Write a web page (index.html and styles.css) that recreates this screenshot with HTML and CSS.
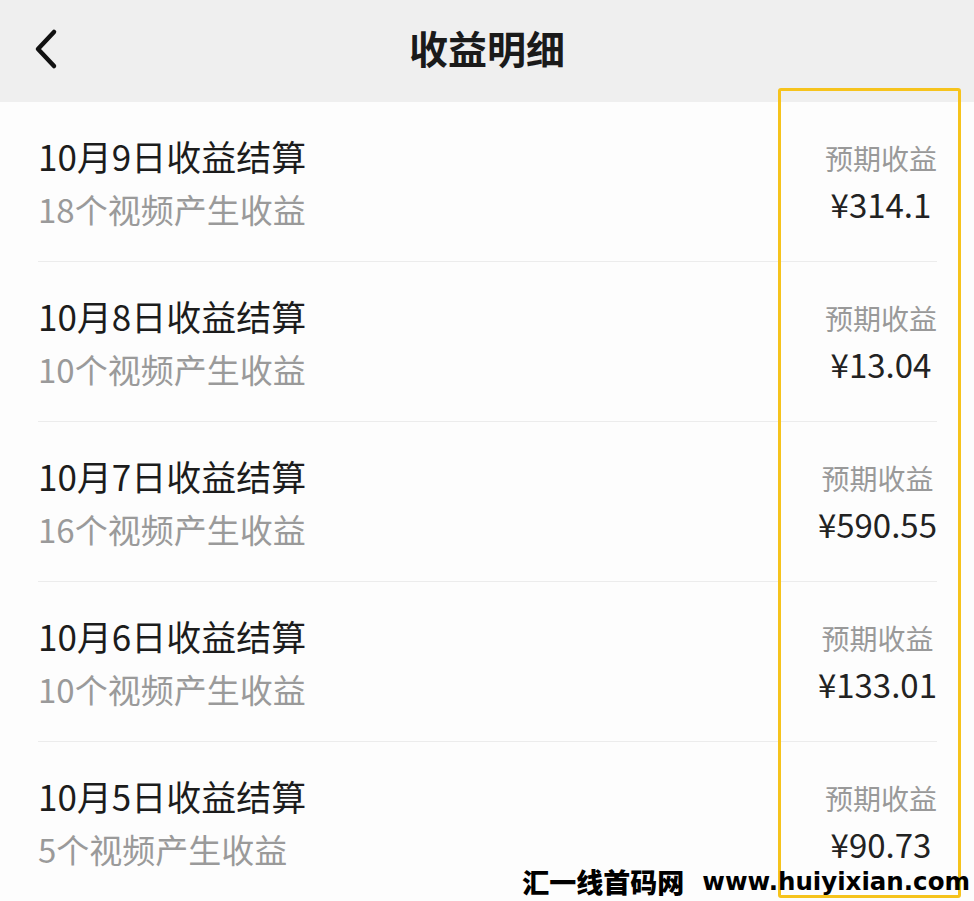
FILE: index.html
```html
<!DOCTYPE html>
<html lang="zh-CN">
<head>
    <meta charset="UTF-8">
    <meta name="viewport" content="width=device-width, initial-scale=1.0">
    <title>收益明细</title>
    <link rel="stylesheet" href="styles.css">
</head>
<body>

<div class="page">
    <header class="nav-bar">
        <button class="back-btn" aria-label="返回">
            <svg width="30" height="44" viewBox="0 0 30 44">
                <path d="M21 5 L5 22 L21 39" fill="none" stroke="#111" stroke-width="4.5" stroke-linecap="round" stroke-linejoin="round"/>
            </svg>
        </button>
        <h1 class="nav-title">收益明细</h1>
    </header>

    <ul class="income-list">
        <li class="income-row">
            <div class="row-left">
                <div class="row-title">10月9日收益结算</div>
                <div class="row-sub">18个视频产生收益</div>
            </div>
            <div class="row-right">
                <div class="row-label">预期收益</div>
                <div class="row-amount">¥314.1</div>
            </div>
        </li>
        <li class="income-row">
            <div class="row-left">
                <div class="row-title">10月8日收益结算</div>
                <div class="row-sub">10个视频产生收益</div>
            </div>
            <div class="row-right">
                <div class="row-label">预期收益</div>
                <div class="row-amount">¥13.04</div>
            </div>
        </li>
        <li class="income-row">
            <div class="row-left">
                <div class="row-title">10月7日收益结算</div>
                <div class="row-sub">16个视频产生收益</div>
            </div>
            <div class="row-right">
                <div class="row-label">预期收益</div>
                <div class="row-amount">¥590.55</div>
            </div>
        </li>
        <li class="income-row">
            <div class="row-left">
                <div class="row-title">10月6日收益结算</div>
                <div class="row-sub">10个视频产生收益</div>
            </div>
            <div class="row-right">
                <div class="row-label">预期收益</div>
                <div class="row-amount">¥133.01</div>
            </div>
        </li>
        <li class="income-row">
            <div class="row-left">
                <div class="row-title">10月5日收益结算</div>
                <div class="row-sub">5个视频产生收益</div>
            </div>
            <div class="row-right">
                <div class="row-label">预期收益</div>
                <div class="row-amount">¥90.73</div>
            </div>
        </li>
    </ul>

    <!-- highlight frame drawn over the amount column -->
    <div class="highlight-box"></div>

    <div class="watermark">
        <span class="wm-cn">汇一线首码网</span>
        <span class="wm-url">www.huiyixian.com</span>
    </div>
</div>

</body>
</html>
```

FILE: styles.css
```css
body {
    margin: 0;
    background-color: #fff;
    font-family: 'Noto Sans CJK SC', 'Noto Sans', sans-serif;
}

.page {
    position: relative;
    width: 974px;
    height: 901px;
    overflow: hidden;
    background-color: #fdfdfd;
}

.nav-bar {
    position: relative;
    height: 102px;
    background-color: #efefef;
    display: flex;
    align-items: center;
    justify-content: center;
}

.back-btn {
    position: absolute;
    left: 33px;
    top: 27px;
    padding: 0;
    border: none;
    background: none;
    display: flex;
}

.nav-title {
    margin: 0 0 8px;
    font-size: 39px;
    font-weight: 700;
    color: #1a1a1a;
}

.income-list {
    list-style: none;
    margin: 0;
    padding: 0 37px 0 38px;
}

.income-row {
    height: 159px;
    display: flex;
    justify-content: space-between;
    border-bottom: 1px solid #ececec;
}

.income-row:last-child {
    border-bottom: none;
}

.row-left {
    padding-top: 29px;
}

.row-title {
    font-size: 35px;
    line-height: 50px;
    color: #1c1c1c;
}

.row-sub {
    font-size: 33px;
    line-height: 56px;
    color: #9a9a9a;
}

.row-right {
    padding-top: 34px;
    text-align: center;
}

.row-label {
    font-size: 28px;
    line-height: 44px;
    color: #999;
}

.row-amount {
    font-size: 33px;
    line-height: 48px;
    color: #222;
}

.highlight-box {
    position: absolute;
    left: 778px;
    top: 88px;
    width: 177px;
    height: 804px;
    border: 3px solid #f6c31c;
    border-radius: 3px;
}

.watermark {
    position: absolute;
    right: 4px;
    top: 865px;
    display: flex;
    align-items: center;
    gap: 18px;
    white-space: nowrap;
    color: #000;
    line-height: 34px;
}

.wm-cn {
    font-size: 27px;
    font-weight: 900;
}

.wm-url {
    font-family: 'DejaVu Sans', sans-serif;
    font-size: 24.5px;
    font-weight: 700;
}
```
